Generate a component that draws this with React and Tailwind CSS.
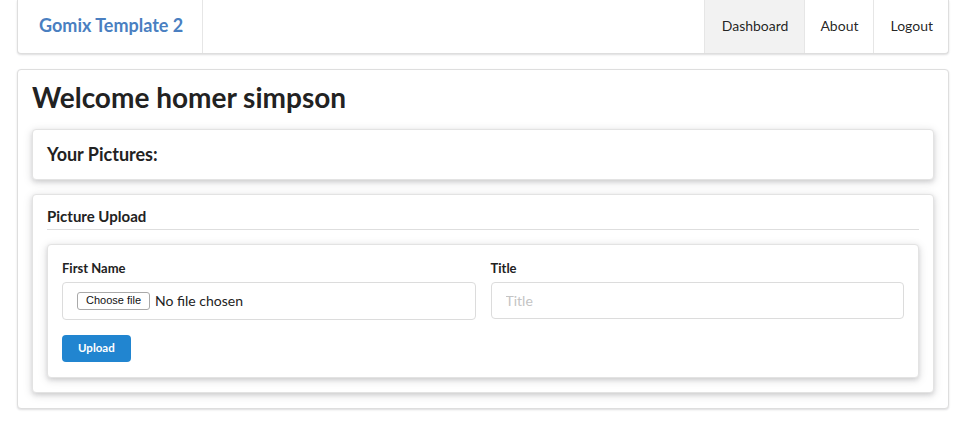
export default function App() {
  const raised = 'shadow-[0_2px_4px_0_rgba(34,36,38,0.12),0_2px_10px_0_rgba(34,36,38,0.15)]'

  return (
    <div className="min-h-screen bg-white text-[rgba(0,0,0,0.87)] font-['Lato','Liberation_Sans',sans-serif] text-sm">
      <div className="w-[932px] ml-[17px]">
        {/* Menu */}
        <nav className="flex h-[54px] bg-white border-x border-b border-[#dedede] rounded-b-[4px] shadow-[0_1px_2px_0_rgba(34,36,38,0.15)]">
          <a className="flex items-center pb-[2px] pl-[21px] pr-[19px] border-r border-[#e6e6e6] text-[18px] font-bold text-[#4a7fc1]">
            Gomix Template 2
          </a>
          <div className="ml-auto flex">
            <a className="flex items-center pb-[2px] pl-[17px] pr-[16px] border-l border-[#e6e6e6] bg-[#f2f2f2] text-[14px]">Dashboard</a>
            <a className="flex items-center pb-[2px] px-[15px] border-l border-[#e6e6e6] text-[14px]">About</a>
            <a className="flex items-center pb-[2px] pl-[16px] pr-[15px] border-l border-[#e6e6e6] text-[14px]">Logout</a>
          </div>
        </nav>

        {/* Main segment */}
        <div className="mt-[15px] bg-white border border-[#dedede] rounded-[4px] shadow-[0_1px_2px_0_rgba(34,36,38,0.15)] px-[14px] pt-[14px] pb-[15px]">
          <h1 className="text-[28px] font-bold leading-[26px] text-[#222]">Welcome homer simpson</h1>

          <div className={`mt-[19px] bg-white border border-[#e3e3e3] rounded-[4px] ${raised} h-[51px] flex items-center px-[14px]`}>
            <h3 className="text-[18px] font-bold text-[#222]">Your Pictures:</h3>
          </div>

          <div className={`mt-[14px] bg-white border border-[#e3e3e3] rounded-[4px] ${raised} p-[14px]`}>
            <h4 className="text-[15px] font-bold leading-[14px] text-[#222] pb-[6px] border-b border-[#dedede]">Picture Upload</h4>

            <form className={`mt-[14px] bg-white border border-[#e3e3e3] rounded-[4px] ${raised} px-[14px] pt-[14px] pb-[15px]`}>
              <div className="grid grid-cols-2 gap-[15px]">
                <div>
                  <label className="block text-[13px] font-bold leading-[18px] text-[#222] mb-[5px]">First Name</label>
                  <div className="h-[38px] border border-[#dcdcdc] rounded-[4px] flex items-center pl-[14px]">
                    <span className="h-[18px] flex items-center px-[8px] bg-white border border-[#a9a9a9] rounded-[3px] font-['Liberation_Sans',sans-serif] text-[11px] text-[#111]">
                      Choose file
                    </span>
                    <span className="ml-[5px] text-[14px] text-[#222]">No file chosen</span>
                  </div>
                </div>
                <div>
                  <label className="block text-[13px] font-bold leading-[18px] text-[#222] mb-[5px]">Title</label>
                  <input
                    type="text"
                    placeholder="Title"
                    className="w-full h-[37px] border border-[#dcdcdc] rounded-[4px] px-[14px] text-[14px] placeholder:text-[#c4c4c4] outline-none"
                  />
                </div>
              </div>
              <button type="button" className="mt-[15px] h-[27px] px-[16px] bg-[#2185d0] text-white text-[11.5px] font-bold rounded-[4px]">
                Upload
              </button>
            </form>
          </div>
        </div>
      </div>
    </div>
  )
}
